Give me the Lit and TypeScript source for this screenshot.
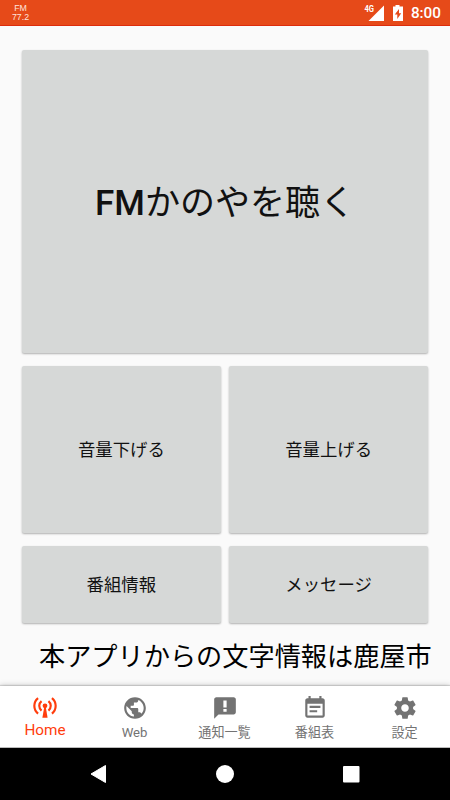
import { LitElement, html, svg, css } from "lit";
import { customElement } from "lit/decorators.js";
import { classMap } from "lit/directives/class-map.js";

const tabs = [
  {
    label: "Home",
    active: true,
    icon: svg`<g fill="none" stroke="currentColor" stroke-width="2">
      <path d="M5.600 2.800C1 6.500 1 13.500 5.600 17.200M18.400 2.800C23 6.500 23 13.500 18.400 17.200M8.800 5.600C6 7.900 6 12.100 8.800 14.400M15.200 5.600C18 7.900 18 12.100 15.200 14.400"/></g>
      <circle cx="12" cy="10" r="2.200"/><path d="M11.300 11h1.400L14.400 21H9.600z"/>`,
  },
  {
    label: "Web",
    active: false,
    icon: svg`<path d="M12 2C6.480 2 2 6.480 2 12s4.480 10 10 10 10-4.480 10-10S17.520 2 12 2zm-1 17.930c-3.950-.49-7-3.850-7-7.930 0-.62.08-1.210.21-1.790L9 15v1c0 1.100.9 2 2 2v1.930zm6.900-2.540c-.26-.81-1-1.390-1.900-1.390h-1v-3c0-.55-.45-1-1-1H8v-2h2c.55 0 1-.45 1-1V7h2c1.100 0 2-.9 2-2v-.41c2.930 1.190 5 4.060 5 7.410 0 2.080-.8 3.970-2.100 5.390z"/>`,
  },
  {
    label: "通知一覧",
    active: false,
    icon: svg`<path d="M20 2H4c-1.100 0-1.990.9-1.990 2L2 22l4-4h14c1.100 0 2-.9 2-2V4c0-1.100-.9-2-2-2zm-6.500 13.500h-3v-2.500h3v2.500zm0-4h-3V5h3v6.500z"/>`,
  },
  {
    label: "番組表",
    active: false,
    icon: svg`<path d="M17 10H7v2h10v-2zm2-7h-1V1h-2v2H8V1H6v2H5c-1.110 0-1.990.9-1.990 2L3 19c0 1.100.89 2 2 2h14c1.100 0 2-.9 2-2V5c0-1.100-.9-2-2-2zm0 16H5V8h14v11zm-5-5H7v2h7v-2z"/>`,
  },
  {
    label: "設定",
    active: false,
    icon: svg`<path d="M19.430 12.980c.04-.32.07-.64.07-.98s-.03-.66-.07-.98l2.110-1.650c.19-.15.24-.42.12-.64l-2-3.460c-.12-.22-.39-.3-.61-.22l-2.490 1c-.52-.4-1.080-.73-1.690-.98l-.38-2.650C14.460 2.180 14.250 2 14 2h-4c-.25 0-.46.18-.49.42l-.38 2.650c-.61.25-1.170.59-1.690.98l-2.490-1c-.23-.09-.49 0-.61.22l-2 3.460c-.13.22-.07.49.12.64l2.110 1.650c-.04.32-.07.65-.07.98s.03.66.07.98l-2.110 1.650c-.19.15-.24.42-.12.64l2 3.460c.12.22.39.3.61.22l2.490-1c.52.4 1.080.73 1.690.98l.38 2.650c.03.24.24.42.49.42h4c.25 0 .46-.18.49-.42l.38-2.650c.61-.25 1.170-.59 1.690-.98l2.490 1c.23.09.49 0 .61-.22l2-3.460c.12-.22.07-.49-.12-.64l-2.110-1.650zM12 15.500c-1.930 0-3.500-1.570-3.500-3.500s1.570-3.500 3.500-3.500 3.500 1.570 3.500 3.500-1.570 3.500-3.500 3.500z"/>`,
  },
];

@customElement("app-root")
export class AppRoot extends LitElement {
  static styles = css`
    :host {
      display: flex;
      flex-direction: column;
      height: 800px;
      width: 450px;
      overflow: hidden;
      background: #fafafa;
      color: #111;
      font-family: Roboto, "Noto Sans CJK JP", sans-serif;
    }
    * {
      box-sizing: border-box;
    }
    svg {
      display: block;
      fill: currentColor;
    }
    .status {
      height: 26px;
      flex: none;
      display: flex;
      align-items: center;
      background: #e64a19;
      border-bottom: 1px solid #dd2c0c;
      color: #fff;
      padding: 0 9px 0 12px;
    }
    .station {
      display: flex;
      flex-direction: column;
      align-items: center;
      margin-right: auto;
      width: 17px;
      color: #ffe4dc;
      font-family: "Liberation Sans", sans-serif;
      font-size: 8.800px;
      line-height: 9px;
    }
    .signal {
      margin-right: 7px;
    }
    .net {
      font-size: 8.500px;
      font-weight: 700;
    }
    .battery {
      margin-right: 7px;
    }
    .time {
      font-size: 15.300px;
      font-weight: 500;
      line-height: 25px;
      padding-top: 2px;
    }
    main {
      flex: 1;
      display: grid;
      grid-template-columns: 1fr 1fr;
      grid-template-rows: 303px 167px 77px;
      gap: 13px 8.500px;
      padding: 24px 22px 0;
      align-content: start;
    }
    button {
      border: 0;
      margin: 0;
      padding: 0 0 2px;
      border-radius: 2px;
      background: #d6d8d7;
      color: #111;
      font: 400 17.400px Roboto, "Noto Sans CJK JP", sans-serif;
      box-shadow: 0 1px 2px rgba(0, 0, 0, 0.3);
    }
    .listen {
      grid-column: 1 / 3;
      font-size: 35px;
      padding-bottom: 4px;
    }
    .latin {
      font-weight: 500;
    }
    .ticker {
      grid-column: 1 / 3;
      margin: 2px -4px 0 17px;
      white-space: nowrap;
      font-size: 26.200px;
      line-height: 39px;
      color: #000;
    }
    nav {
      height: 62px;
      flex: none;
      display: grid;
      grid-template-columns: repeat(5, 1fr);
      background: #fff;
      border-bottom: 1px solid #bbb;
      box-shadow: 0 0 6px rgba(0, 0, 0, 0.25), 0 -1px 1px rgba(0, 0, 0, 0.12);
    }
    .tab {
      display: flex;
      flex-direction: column;
      align-items: center;
      padding: 9px 1px 0 0;
      color: #737373;
      font-size: 13.125px;
      line-height: 20px;
      gap: 2px;
    }
    .active {
      padding: 9px 0 0;
      color: #ff3d0d;
      font-size: 15.300px;
      line-height: 18px;
      gap: 0;
    }
    .system {
      height: 52px;
      flex: none;
      display: grid;
      grid-template-columns: 127px 127px 127px;
      justify-content: center;
      place-items: center;
      background: #000;
      color: #fff;
    }
  `;

  render() {
    return html`
      <header class="status">
        <div class="station"><span>FM</span><span>77.2</span></div>
        <svg class="signal" width="21" height="20" viewBox="0 0 21 20">
          <text class="net" x="0.500" y="9" textLength="9.500" lengthAdjust="spacingAndGlyphs">4G</text>
          <path d="M20 2.500V18H4.500z" />
        </svg>
        <svg class="battery" width="12" height="20" viewBox="0 0 12 20">
          <path fill-rule="evenodd" d="M3.500 2h4v1.500H11V18H1V3.500h2.500zM7 6L2.800 11.500H5.300V16L9.200 10.300H7z" />
        </svg>
        <span class="time">8:00</span>
      </header>
      <main>
        <button class="listen"><span class="latin">FM</span>かのやを聴く</button>
        <button>音量下げる</button>
        <button>音量上げる</button>
        <button>番組情報</button>
        <button>メッセージ</button>
        <div class="ticker">本アプリからの文字情報は鹿屋市</div>
      </main>
      <nav>
        ${tabs.map(
          (t) => html`<div class=${classMap({ tab: true, active: t.active })}>
            <svg width="26" height="26" viewBox="0 0 24 24">${t.icon}</svg>
            <span>${t.label}</span>
          </div>`
        )}
      </nav>
      <footer class="system">
        <svg width="18" height="20" viewBox="0 0 18 20"><path d="M16.500 1.500v17L2 10z" stroke="#fff" stroke-linejoin="round" /></svg>
        <svg width="18" height="18" viewBox="0 0 18 18"><circle cx="9" cy="9" r="9" /></svg>
        <svg width="18" height="17" viewBox="0 0 18 17"><rect width="16.500" height="16.500" rx="1" /></svg>
      </footer>
    `;
  }
}
